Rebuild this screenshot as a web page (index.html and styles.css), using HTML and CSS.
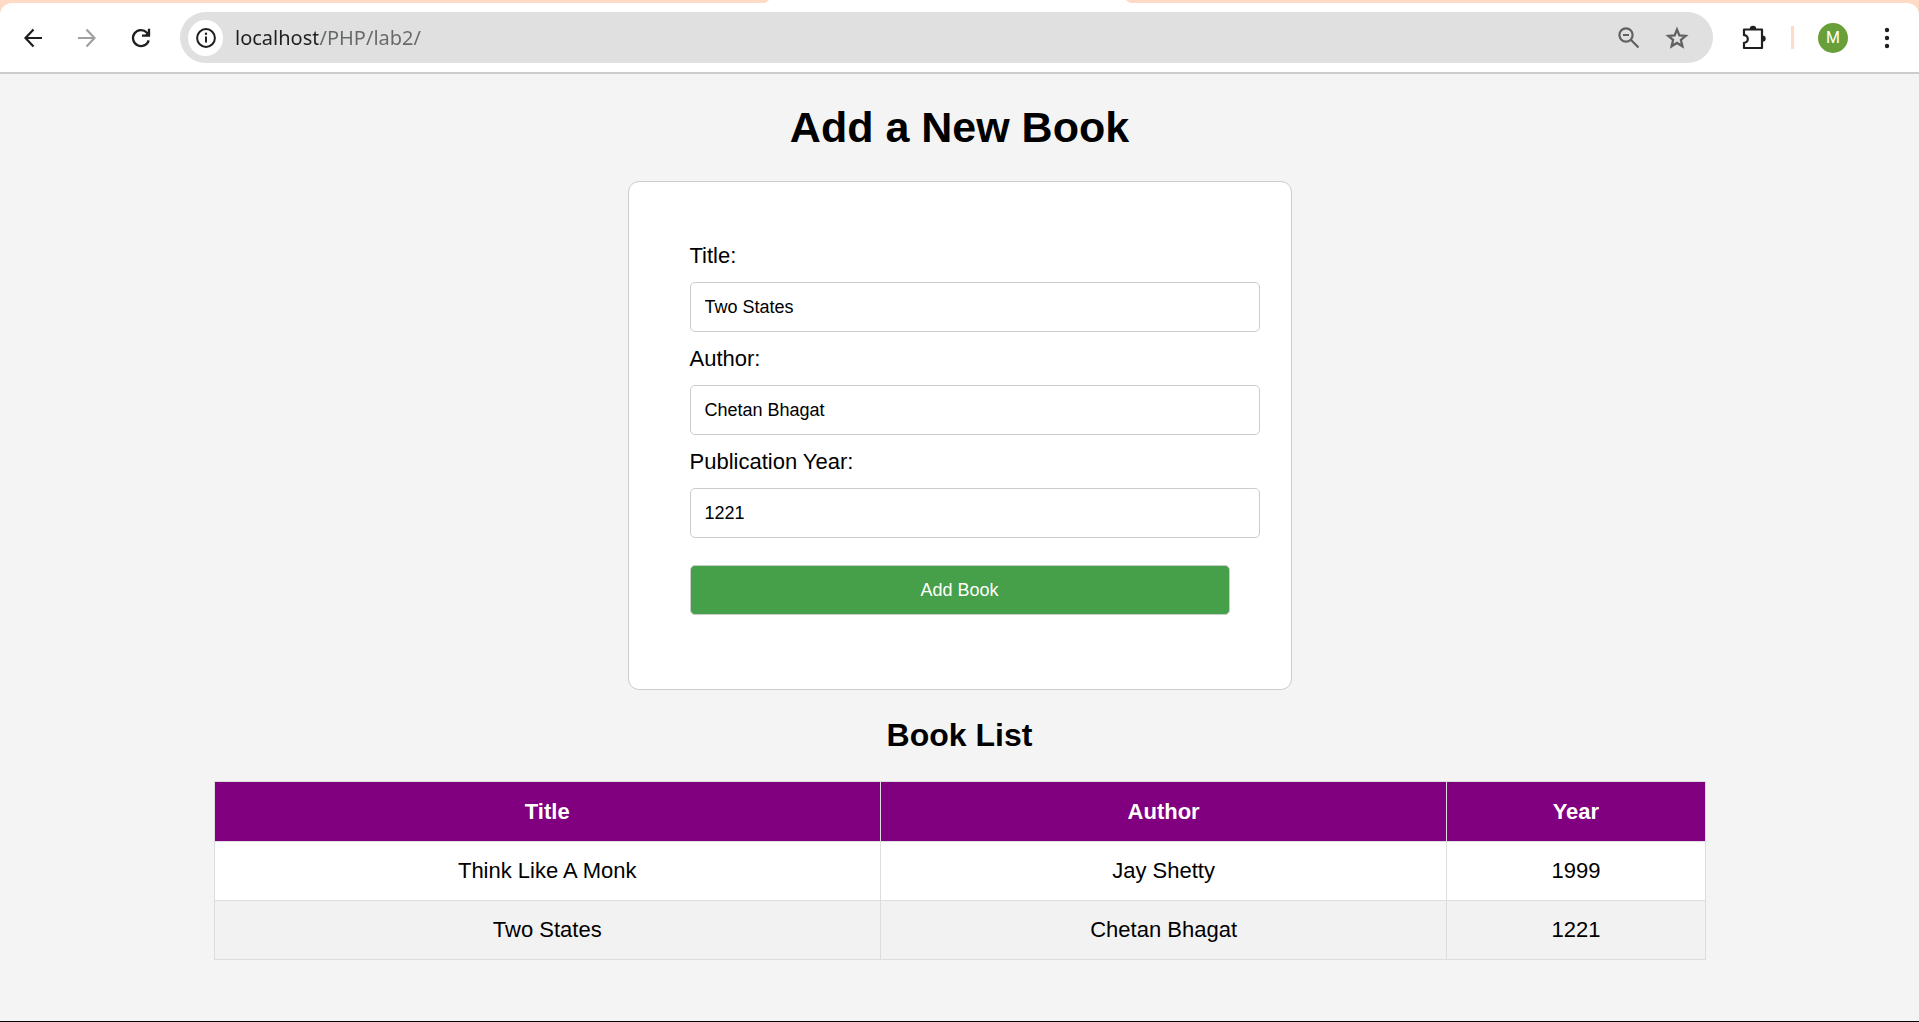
FILE: index.html
```html
<!DOCTYPE html>
<html lang="en">
<head>
<meta charset="utf-8">
<meta name="viewport" content="width=device-width, initial-scale=1">
<title>Book List</title>
<link rel="stylesheet" href="styles.css">
</head>
<body>
<header class="browser">
  <div class="tab-strip"><div class="active-tab"></div></div>
  <div class="toolbar">
    <nav class="nav-buttons" aria-label="Browser navigation">
      <button type="button" class="icon-button" aria-label="Back">
        <svg width="24" height="24" viewBox="0 0 24 24" fill="none" stroke="#1f1f1f" stroke-width="2.200"><path d="M21 12H4.500M12.500 3.500L4.500 12l8 8.500"/></svg>
      </button>
      <button type="button" class="icon-button" aria-label="Forward" disabled>
        <svg width="24" height="24" viewBox="0 0 24 24" fill="none" stroke="#a0a0a0" stroke-width="2.200"><path d="M3 12h16.500M11.500 3.500L19.500 12l-8 8.500"/></svg>
      </button>
      <button type="button" class="icon-button" aria-label="Reload">
        <svg width="24" height="24" viewBox="0 0 24 24" fill="none" stroke="#1f1f1f" stroke-width="2.300"><path d="M19.700 14.300A8 8 0 1 1 17.800 6.500L20 8.800"/><path d="M20 2.800v6.800h-7"/><path d="M20 5v4h-4z" fill="#1f1f1f" stroke="none"/></svg>
      </button>
    </nav>
    <div class="omnibox">
      <button type="button" class="site-info" aria-label="View site information">
        <svg width="22" height="22" viewBox="0 0 22 22"><circle cx="11" cy="11" r="8.900" fill="none" stroke="#1f1f1f" stroke-width="2"/><path d="M11 9.500v6" stroke="#1f1f1f" stroke-width="2"/><circle cx="11" cy="6.800" r="1.200" fill="#1f1f1f"/></svg>
      </button>
      <input class="address" type="text" aria-label="Address" value="localhost/PHP/lab2/">
      <button type="button" class="icon-button" aria-label="Zoom">
        <svg width="24" height="24" viewBox="0 0 24 24" fill="none" stroke="#5f6163" stroke-width="2.200"><circle cx="9" cy="9" r="6.600"/><path d="M13.800 13.800l7.700 7.700M6 9h6"/></svg>
      </button>
      <button type="button" class="icon-button" aria-label="Bookmark this page">
        <svg width="24" height="24" viewBox="0 0 24 24" fill="none" stroke="#5f6163" stroke-width="2.300"><path d="M12 3.600l2.400 5.800 6.300.5-4.800 4.100 1.500 6.200-5.400-3.300-5.400 3.300 1.500-6.200-4.800-4.100 6.300-.5z"/></svg>
      </button>
    </div>
    <div class="tools">
      <button type="button" class="icon-button" aria-label="Extensions">
        <svg width="26" height="26" viewBox="0 0 26 26"><path d="M3 4.500h18v18.500H3v-5.200a3.600 3.600 0 0 0 0-7.600z" fill="none" stroke="#1f1f1f" stroke-width="2.200" stroke-linejoin="round"/><path d="M8.800 4a3.200 3.200 0 0 1 6.400 0zM21.500 10.400a3.200 3.200 0 0 1 0 6.400z" fill="#1f1f1f"/></svg>
      </button>
      <span class="divider"></span>
      <button type="button" class="avatar" aria-label="Profile">M</button>
      <button type="button" class="icon-button" aria-label="Menu">
        <svg width="24" height="24" viewBox="0 0 24 24" fill="#1f1f1f"><circle cx="12" cy="4" r="2.200"/><circle cx="12" cy="12" r="2.200"/><circle cx="12" cy="20" r="2.200"/></svg>
      </button>
    </div>
  </div>
</header>
<main class="page">
  <h1>Add a New Book</h1>
  <form class="book-form">
    <label for="title">Title:</label>
    <input class="field" type="text" id="title" value="Two States">
    <label for="author">Author:</label>
    <input class="field" type="text" id="author" value="Chetan Bhagat">
    <label for="year">Publication Year:</label>
    <input class="field" type="text" inputmode="numeric" id="year" value="1221">
    <button type="submit" class="submit">Add Book</button>
  </form>
  <h2>Book List</h2>
  <table class="books">
    <thead>
      <tr><th scope="col">Title</th><th scope="col">Author</th><th scope="col">Year</th></tr>
    </thead>
    <tbody>
      <tr><td>Think Like A Monk</td><td>Jay Shetty</td><td>1999</td></tr>
      <tr><td>Two States</td><td>Chetan Bhagat</td><td>1221</td></tr>
    </tbody>
  </table>
</main>
</body>
</html>
```
FILE: styles.css
```css
body {
  margin: 0;
  min-height: 100vh;
  box-sizing: border-box;
  display: flex;
  flex-direction: column;
  border-bottom: 1px solid #000;
  background: #f4f4f4;
  color: #000;
  font: 22px/25px "Liberation Sans", Arial, sans-serif;
}

button {
  font-family: inherit;
  cursor: pointer;
}

/* Browser bar */
.browser {
  background: #ffdac7;
  border-bottom: 2px solid #ccc;
}

.tab-strip {
  display: flex;
  justify-content: center;
  height: 3px;
}

.active-tab {
  width: 19%;
  margin-right: 24px;
  background: #fff;
  clip-path: polygon(4px 0, calc(100% - 4px) 0, 100% 100%, 0 100%);
}

.toolbar {
  display: flex;
  align-items: center;
  height: 69px;
  box-sizing: border-box;
  padding: 0 20px 0 21px;
  background: #fff;
  border-radius: 12px 12px 0 0;
}

.nav-buttons {
  display: flex;
  gap: 30px;
  margin-right: 27px;
}

.icon-button {
  display: flex;
  padding: 0;
  border: 0;
  background: none;
}

.omnibox {
  flex: 1;
  display: flex;
  align-items: center;
  gap: 24px;
  height: 51px;
  box-sizing: border-box;
  padding: 0 24px 0 8px;
  border-radius: 26px;
  background: #e0e0e0;
}

.site-info {
  display: flex;
  align-items: center;
  justify-content: center;
  width: 35px;
  height: 36px;
  margin-right: -12px;
  padding: 0;
  border: 0;
  border-radius: 50%;
  background: #fff;
}

/* The host part of the address is dark, the path is grey */
.address {
  flex: 1;
  min-width: 0;
  height: 36px;
  padding: 0;
  border: 0;
  outline: 0;
  background: linear-gradient(to right, #1f1f1f 83px, #66686a 83px);
  background-clip: text;
  -webkit-background-clip: text;
  -webkit-text-fill-color: transparent;
  font: 20px/36px "Noto Sans", sans-serif;
}

.tools {
  display: flex;
  align-items: center;
  margin-left: 28px;
}

.divider {
  width: 3px;
  height: 23px;
  margin: 0 24px;
  background: #ffdac7;
}

.avatar {
  width: 30px;
  height: 30px;
  margin-right: 27px;
  padding: 0;
  border: 0;
  border-radius: 50%;
  background: #689f38;
  color: #fff;
  font: 16px/30px Roboto, sans-serif;
}

/* Page */
.page {
  flex: 1;
  display: flex;
  flex-direction: column;
  align-items: center;
  padding: 28px 27px;
}

h1,
h2 {
  margin: 0;
}

h1 {
  font-size: 43px;
  line-height: 50px;
}

h2 {
  margin: 26px 0 27px;
  font-size: 32px;
  line-height: 38px;
}

.book-form {
  display: flex;
  flex-direction: column;
  gap: 14px;
  width: 100%;
  max-width: 664px;
  box-sizing: border-box;
  margin-top: 29px;
  padding: 61px 61px 74px;
  border: 1px solid #ccc;
  border-radius: 11px;
  background: #fff;
}

.field,
.submit {
  height: 50px;
  border: 1px solid #ccc;
  border-radius: 5px;
  font-family: inherit;
  font-size: 18px;
}

/* Fields reach past the form column by their own padding */
.field {
  box-sizing: content-box;
  width: 100%;
  height: 48px;
  padding: 0 14px;
  background: #fff;
  color: #000;
}

.submit {
  margin-top: 13px;
  background: #45a049;
  color: #fff;
}

.books {
  width: 80%;
  border-collapse: collapse;
  background: #fff;
}

.books th,
.books td {
  padding: 17px 16px;
  border: 1px solid #ddd;
  text-align: center;
}

.books td {
  padding-top: 16px;
}

.books th {
  background: #800080;
  color: #fff;
}

.books tbody tr:nth-child(even) {
  background: #f2f2f2;
}
```
